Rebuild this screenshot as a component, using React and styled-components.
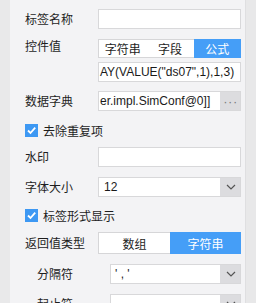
import React from "react";
import styled, { createGlobalStyle } from "styled-components";

const GlobalStyle = createGlobalStyle`
  html, body {
    margin: 0;
    padding: 0;
    background: #f3f3f5;
  }
  body {
    font-family: "Liberation Sans", "Noto Sans CJK SC", sans-serif;
    font-size: 12px;
    color: #222;
  }
`;

const Chevron = () => (
  <svg width="10" height="6" viewBox="0 0 10 6">
    <path d="M1 1 L5 5 L9 1" fill="none" stroke="#555" strokeWidth="1.2" />
  </svg>
);

const Check = () => (
  <svg width="11" height="11" viewBox="0 0 11 11">
    <path d="M2 5.5 L4.5 8 L9.2 2.6" fill="none" stroke="#fff" strokeWidth="1.8" />
  </svg>
);

const App = () => {
  return (
    <>
      <GlobalStyle />
      <Frame>
        <SideStrip />
        <Panel>
          <Row $gap={0}>
            <Label>标签名称</Label>
            <Input />
          </Row>

          <Row $gap={10}>
            <Label $lh={14}>控件值</Label>
            <Stack>
              <Segmented>
                <Tab>字符串</Tab>
                <Tab>字段</Tab>
                <Tab $active>公式</Tab>
              </Segmented>
              <Input>
                <Value>AY(VALUE("ds07",1),1,3)</Value>
              </Input>
            </Stack>
          </Row>

          <Row $gap={9}>
            <Label>数据字典</Label>
            <Input>
              <Value>er.impl.SimConf@0]]</Value>
              <DotsButton>···</DotsButton>
            </Input>
          </Row>

          <CheckRow $gap={9}>
            <Box>
              <Check />
            </Box>
            去除重复项
          </CheckRow>

          <Row $gap={7}>
            <Label>水印</Label>
            <Input />
          </Row>

          <Row $gap={10}>
            <Label>字体大小</Label>
            <Input>
              <Value $pad={5}>12</Value>
              <DropButton>
                <Chevron />
              </DropButton>
            </Input>
          </Row>

          <CheckRow $gap={8}>
            <Box>
              <Check />
            </Box>
            标签形式显示
          </CheckRow>

          <Row $gap={7}>
            <Label $lh={22}>返回值类型</Label>
            <Segmented>
              <Tab>数组</Tab>
              <Tab $active>字符串</Tab>
            </Segmented>
          </Row>

          <Row $gap={10}>
            <Label $indent>分隔符</Label>
            <Input>
              <Value $pad={4}>' , '</Value>
              <DropButton>
                <Chevron />
              </DropButton>
            </Input>
          </Row>

          <Row $gap={10}>
            <Label $indent>起止符</Label>
            <Input>
              <Value $pad={4} />
              <DropButton>
                <Chevron />
              </DropButton>
            </Input>
          </Row>
        </Panel>
        <ScrollTrack />
      </Frame>
    </>
  );
};

export default App;

const Frame = styled.div`
  display: flex;
  height: 303px;
  overflow: hidden;
`;

const SideStrip = styled.div`
  width: 10px;
  flex-shrink: 0;
  background: #e9e9ea;
`;

const ScrollTrack = styled.div`
  width: 10px;
  flex-shrink: 0;
  background: #e8e8e9;
  border-left: 1px solid #dfdfe1;
`;

const Panel = styled.div`
  flex: 1;
  padding: 9px 4px 0 15px;
  background: #f3f3f5;
  overflow: hidden;
`;

const Row = styled.div`
  display: flex;
  align-items: flex-start;
  margin-top: ${(p) => p.$gap}px;
`;

const Label = styled.div`
  width: 73px;
  padding-left: ${(p) => (p.$indent ? 12 : 0)}px;
  flex-shrink: 0;
  font-family: "Noto Sans CJK SC", sans-serif;
  font-size: 12px;
  line-height: ${(p) => p.$lh || 20}px;
  color: #1e1e1e;
  white-space: nowrap;
`;

const Stack = styled.div`
  flex: 1;
  display: flex;
  flex-direction: column;
  gap: 4px;
`;

const Input = styled.div`
  flex: 1;
  height: 20px;
  box-sizing: border-box;
  display: flex;
  align-items: stretch;
  background: #fff;
  border: 1px solid #d8d8da;
  overflow: hidden;
`;

const Value = styled.div`
  flex: 1;
  min-width: 0;
  padding-left: ${(p) => (p.$pad === undefined ? 1 : p.$pad)}px;
  font-family: "Liberation Sans", sans-serif;
  font-size: 12px;
  line-height: 18px;
  color: #1a1a1a;
  white-space: pre;
  overflow: hidden;
`;

const DotsButton = styled.div`
  width: 21px;
  margin: -1px -1px -1px 0;
  background: #dcdcdf;
  color: #7c7c80;
  font-size: 13px;
  letter-spacing: 0.5px;
  display: flex;
  align-items: center;
  justify-content: center;
`;

const DropButton = styled.div`
  width: 21px;
  margin: -1px -1px -1px 0;
  background: #dcdcdf;
  display: flex;
  align-items: center;
  justify-content: center;
`;

const Segmented = styled.div`
  flex: 1;
  height: 22px;
  box-sizing: border-box;
  display: flex;
  background: #fff;
  border: 1px solid #d6d6d8;
`;

const Tab = styled.div`
  flex: 1;
  display: flex;
  align-items: center;
  justify-content: center;
  font-family: "Noto Sans CJK SC", sans-serif;
  font-size: 12px;
  color: ${(p) => (p.$active ? "#fff" : "#1e1e1e")};
  background: ${(p) => (p.$active ? "#459ef7" : "transparent")};
  margin: ${(p) => (p.$active ? "-1px -1px -1px 0" : "0")};
`;

const CheckRow = styled.label`
  display: flex;
  align-items: center;
  gap: 5px;
  height: 20px;
  margin-top: ${(p) => p.$gap}px;
  font-family: "Noto Sans CJK SC", sans-serif;
  font-size: 12px;
  color: #1e1e1e;
`;

const Box = styled.span`
  width: 13px;
  height: 13px;
  background: #3d98f3;
  display: flex;
  align-items: center;
  justify-content: center;
`;
